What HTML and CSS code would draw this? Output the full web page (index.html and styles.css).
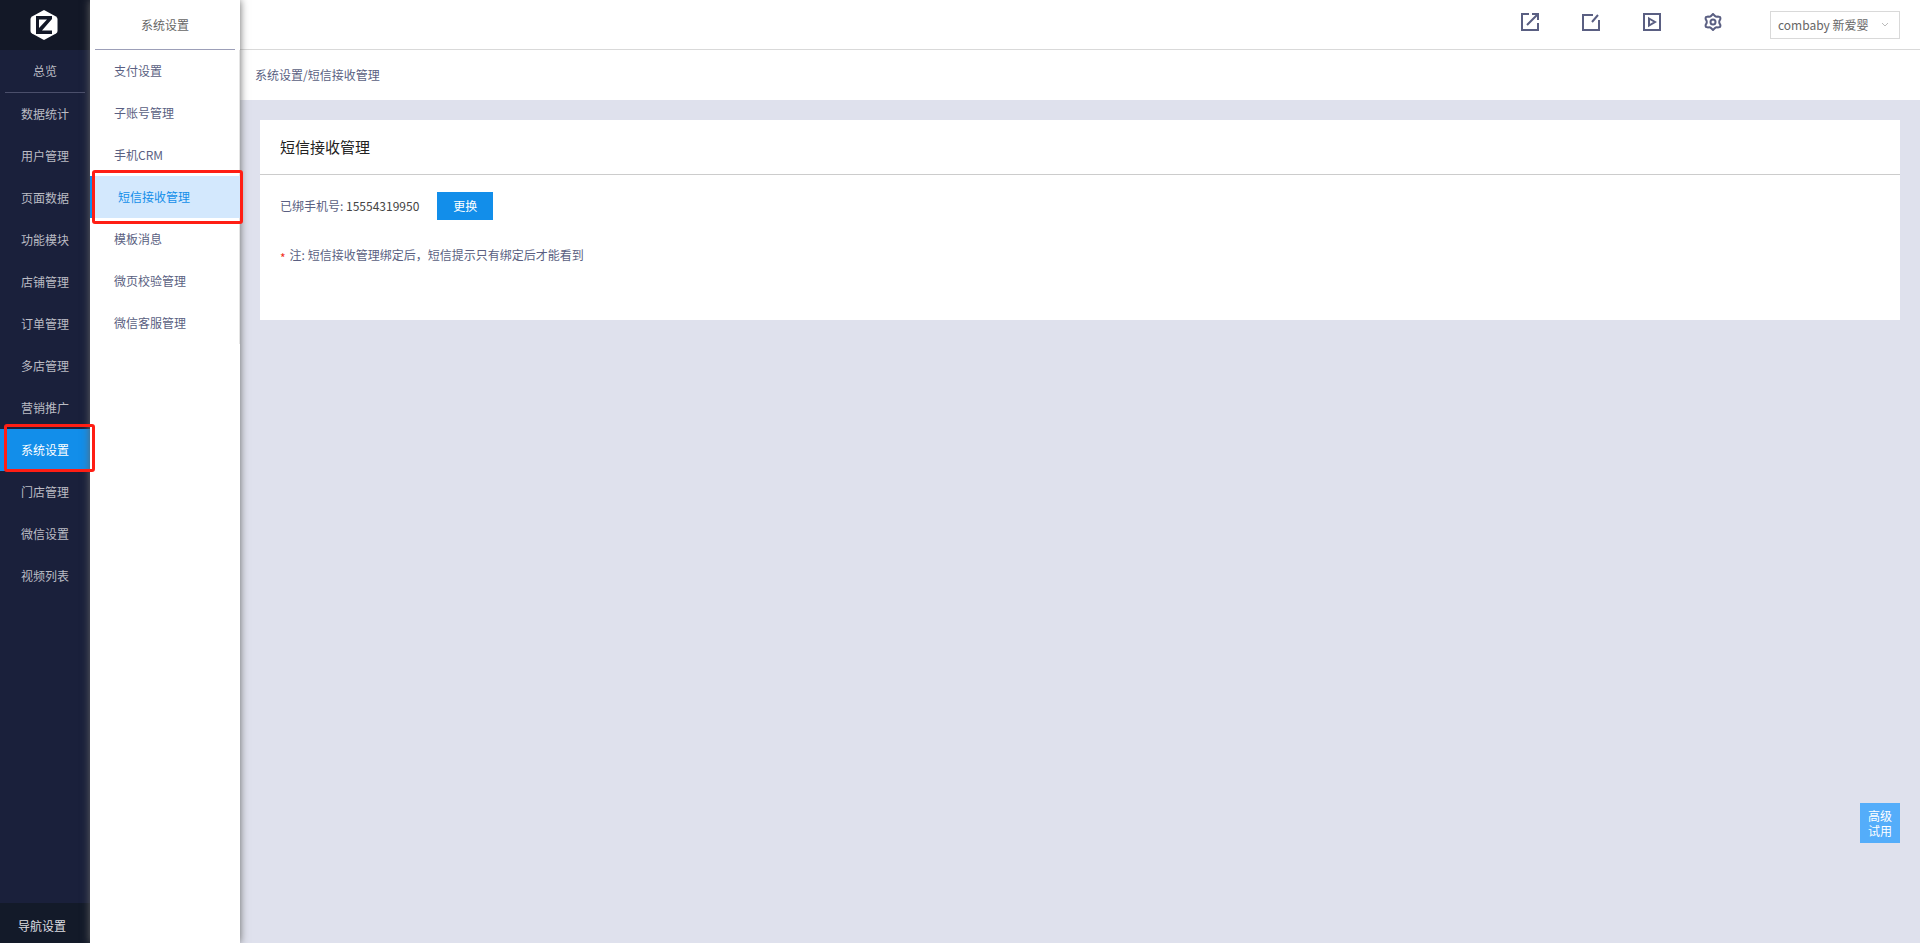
FILE: index.html
```html
<!DOCTYPE html>
<html lang="zh-CN">
<head>
    <meta charset="UTF-8">
    <meta name="viewport" content="width=device-width, initial-scale=1.0">
    <title>短信接收管理</title>
    <link rel="stylesheet" href="styles.css">
</head>
<body>

<nav class="sidebar">
    <a class="logo" href="#" aria-label="首页">
        <svg width="28" height="30" viewBox="0 0 28 30">
            <path d="M14 0 L26 6.500 Q27.500 7.500 27.500 9 V21 Q27.500 22.500 26 23.500 L14 30 L2 23.500 Q0.500 22.500 0.500 21 V9 Q0.500 7.500 2 6.500 Z" fill="#fff"/>
            <path d="M6 6 H22 V9 L12 20.500 H22 V24 H6 Z M9 9.500 V18 L17 9.500 Z" fill="#131827" fill-rule="evenodd"/>
        </svg>
    </a>
    <a class="overview" href="#">总览</a>
    <ul class="menu">
        <li><a href="#">数据统计</a></li>
        <li><a href="#">用户管理</a></li>
        <li><a href="#">页面数据</a></li>
        <li><a href="#">功能模块</a></li>
        <li><a href="#">店铺管理</a></li>
        <li><a href="#">订单管理</a></li>
        <li><a href="#">多店管理</a></li>
        <li><a href="#">营销推广</a></li>
        <li class="active"><a href="#">系统设置</a><span class="mark"></span></li>
        <li><a href="#">门店管理</a></li>
        <li><a href="#">微信设置</a></li>
        <li><a href="#">视频列表</a></li>
    </ul>
    <a class="nav-setting" href="#">导航设置</a>
</nav>

<nav class="submenu">
    <h2>系统设置</h2>
    <ul>
        <li><a href="#">支付设置</a></li>
        <li><a href="#">子账号管理</a></li>
        <li><a href="#">手机CRM</a></li>
        <li class="active"><a href="#">短信接收管理</a><span class="mark"></span></li>
        <li><a href="#">模板消息</a></li>
        <li><a href="#">微页校验管理</a></li>
        <li><a href="#">微信客服管理</a></li>
    </ul>
</nav>

<div class="main">
    <header class="topbar">
        <div class="tools">
            <button type="button" aria-label="打开">
                <svg width="18" height="18" viewBox="0 0 18 18">
                    <path d="M8 1 H1 V17 H17 V10 M11 1 H17 V7 M6 12 L16 2"/>
                </svg>
            </button>
            <button type="button" aria-label="编辑">
                <svg width="18" height="18" viewBox="0 0 18 18">
                    <path d="M11 2 H1 V17 H17 V7 M10 9 L16 2"/>
                </svg>
            </button>
            <button type="button" aria-label="播放">
                <svg width="18" height="18" viewBox="0 0 18 18">
                    <path d="M1 1 H17 V17 H1 Z M6 5.500 L12 9 L6 12.500 Z"/>
                </svg>
            </button>
            <button type="button" aria-label="设置">
                <svg width="18" height="18" viewBox="0 0 18 18">
                    <path d="M7 3 L9 1 L11 3 Q12 4 14 3.500 L16 4 Q17 6 15.500 7.500 Q15 9 15.500 10.500 Q17 12 16 14 L14 14.500 Q12 14 11 15 L9 17 L7 15 Q6 14 4 14.500 L2 14 Q1 12 2.500 10.500 Q3 9 2.500 7.500 Q1 6 2 4 L4 3.500 Q6 4 7 3 Z"/>
                    <circle cx="9" cy="9" r="2.500"/>
                </svg>
            </button>
        </div>
        <div class="account">
            <select aria-label="店铺">
                <option>combaby 新爱婴</option>
            </select>
            <svg width="8" height="6" viewBox="0 0 8 6">
                <path d="M1 1 L4 4 L7 1"/>
            </svg>
        </div>
    </header>

    <div class="crumbs"><a href="#">系统设置</a>/<a href="#">短信接收管理</a></div>

    <section class="card">
        <h1>短信接收管理</h1>
        <div class="card-body">
            <div class="phone">
                <p>已绑手机号: <span>15554319950</span></p>
                <button type="button">更换</button>
            </div>
            <p class="note"><i>*</i>注: 短信接收管理绑定后，短信提示只有绑定后才能看到</p>
        </div>
    </section>
</div>

<button class="trial" type="button">高级<br>试用</button>

</body>
</html>
```
FILE: styles.css
```css
* {
    margin: 0;
    padding: 0;
    box-sizing: border-box;
}

body {
    display: flex;
    min-height: 100vh;
    background: #dfe1ed;
    color: #5a5f82;
    font-family: "Noto Sans CJK SC", sans-serif;
    font-size: 12px;
    line-height: 18px;
}

a {
    color: inherit;
    text-decoration: none;
}

ul {
    list-style: none;
}

button, select {
    border: none;
    border-radius: 0;
    background: none;
    font: inherit;
    cursor: pointer;
}

/* left navigation */
.sidebar {
    display: flex;
    flex-direction: column;
    flex: 0 0 90px;
    background: #1a203b;
    color: #bbbcc4;
    text-align: center;
}

.logo {
    display: flex;
    align-items: center;
    justify-content: center;
    height: 50px;
    padding-right: 3px;
    background: #131827;
}

.overview {
    margin: 0 5px;
    line-height: 42px;
    border-bottom: 1px solid #4b4f6b;
}

.menu li {
    position: relative;
}

.menu a {
    display: block;
    line-height: 42px;
}

.menu .active {
    background: #128eea;
    color: #fff;
}

.nav-setting {
    margin-top: auto;
    padding-top: 6px;
    padding-right: 6px;
    background: #131a29;
    color: #dddde0;
    line-height: 34px;
}

/* second level */
.submenu {
    position: relative;
    z-index: 1;
    flex: 0 0 150px;
    background: #fff;
    box-shadow: 0 0 8px #666;
}

.submenu h2 {
    margin: 0 5px;
    border-bottom: 1px solid #9c9fb8;
    color: #666;
    font-size: 12px;
    font-weight: normal;
    line-height: 49px;
    text-align: center;
}

.submenu ul {
    border-right: 1px solid #e5e5e5;
}

.submenu li {
    position: relative;
}

.submenu a {
    display: block;
    padding-left: 24px;
    line-height: 42px;
}

.submenu .active {
    margin-right: -1px;
    border-left: 4px solid #128eea;
    background: #d3e8fd;
    color: #128eea;
}

/* red frames round the selected entries */
.mark {
    position: absolute;
    z-index: 2;
    border: 3px solid #ff1e14;
    border-radius: 3px;
    pointer-events: none;
}

.menu .mark {
    top: -5px;
    right: -5px;
    bottom: -1px;
    left: 4px;
}

.submenu .mark {
    top: -6px;
    right: -3px;
    bottom: -6px;
    left: -2px;
}

/* content */
.main {
    flex: 1;
    min-width: 0;
}

.topbar {
    display: flex;
    align-items: center;
    justify-content: flex-end;
    gap: 48px;
    height: 50px;
    padding-right: 20px;
    border-bottom: 1px solid #d9d9d9;
    background: #fff;
}

.tools {
    display: flex;
    gap: 43px;
    padding-bottom: 5px;
}

.tools button, .tools svg {
    display: block;
}

.tools path, .tools circle {
    fill: none;
    stroke: #5a5f82;
    stroke-width: 2;
}

.account {
    position: relative;
}

.account select {
    appearance: none;
    display: block;
    width: 130px;
    height: 28px;
    padding: 0 24px 0 7px;
    border: 1px solid #d9d9d9;
    background: #fff;
    color: #666;
}

.account svg {
    position: absolute;
    top: 11px;
    right: 11px;
    fill: none;
    stroke: #bbb;
    pointer-events: none;
}

.crumbs {
    padding-left: 15px;
    background: #fff;
    line-height: 50px;
}

.card {
    min-height: 200px;
    margin: 20px;
    background: #fff;
}

.card h1 {
    padding-left: 20px;
    border-bottom: 1px solid #ccc;
    color: #222;
    font-size: 15px;
    font-weight: normal;
    line-height: 54px;
}

.card-body {
    padding: 17px 20px;
}

.phone {
    display: flex;
    align-items: center;
    gap: 18px;
    margin-bottom: 26px;
}

.phone span {
    color: #444;
}

.phone button {
    width: 56px;
    height: 28px;
    background: #128eea;
    color: #fff;
}

.note i {
    margin-right: 4px;
    color: #f03020;
    font-style: normal;
    line-height: 1;
    vertical-align: sub;
}

.trial {
    position: fixed;
    right: 20px;
    bottom: 100px;
    width: 40px;
    height: 40px;
    background: #54adfa;
    color: #fff;
    line-height: 15px;
}
```
